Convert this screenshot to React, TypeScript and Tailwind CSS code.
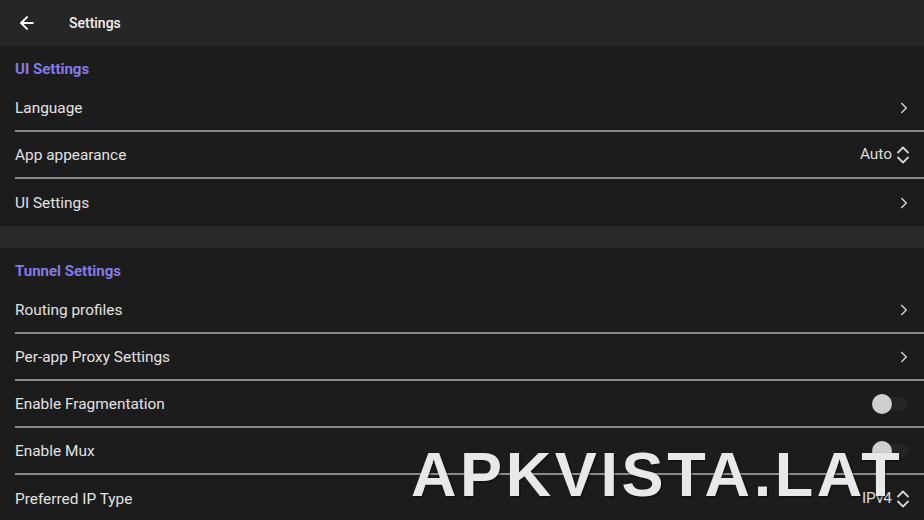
import { ArrowLeft, ChevronRight } from "lucide-react"

type Row =
  | { label: string; kind: "link" }
  | { label: string; kind: "select"; value: string }
  | { label: string; kind: "switch" }

const SECTIONS: { title: string; rows: Row[] }[] = [
  {
    title: "UI Settings",
    rows: [
      { label: "Language", kind: "link" },
      { label: "App appearance", kind: "select", value: "Auto" },
      { label: "UI Settings", kind: "link" },
    ],
  },
  {
    title: "Tunnel Settings",
    rows: [
      { label: "Routing profiles", kind: "link" },
      { label: "Per-app Proxy Settings", kind: "link" },
      { label: "Enable Fragmentation", kind: "switch" },
      { label: "Enable Mux", kind: "switch" },
      { label: "Preferred IP Type", kind: "select", value: "IPv4" },
    ],
  },
]

const UpDown = () => (
  <svg width="14" height="20" viewBox="0 0 14 20" fill="none" stroke="#d6d6d6" strokeWidth="1.8" strokeLinecap="round" strokeLinejoin="round">
    <path d="M2 7.5 L7 2.5 L12 7.5" />
    <path d="M2 12.5 L7 17.5 L12 12.5" />
  </svg>
)

const Trailing = ({ row }: { row: Row }) => {
  if (row.kind === "link") {
    return <ChevronRight className="w-[18px] h-[18px] -mr-[3px] text-[#d0d0d0]" strokeWidth={2} />
  }
  if (row.kind === "select") {
    return (
      <div className="flex items-center gap-[4px]">
        <span className="text-[15.4px] text-[#dcdcdc]">{row.value}</span>
        <UpDown />
      </div>
    )
  }
  return (
    <div className="relative w-[36px] h-[20px] mr-[2px] flex items-center">
      <div className="absolute left-[6px] right-0 h-[14px] rounded-full bg-[#252525]" />
      <div className="absolute left-0 w-[20px] h-[20px] rounded-full bg-[#cfcfcf]" />
    </div>
  )
}

export default function App() {
  return (
    <div className="relative w-[924px] h-[520px] overflow-hidden bg-[#1c1c1c] font-['Roboto',sans-serif] text-[#e2e2e2]">
      <div className="h-[46px] bg-[#262626] flex items-center">
        <ArrowLeft className="ml-[17px] w-[20px] h-[20px] text-white" strokeWidth={2.4} />
        <span className="ml-[32px] text-[14px] font-medium text-[#f0f0f0]">Settings</span>
      </div>

      {SECTIONS.map((section, si) => (
        <div key={section.title}>
          {si > 0 && <div className="h-[22px] bg-[#292929]" />}
          <div className="h-[39px] pt-[14px] pl-[15px] leading-[18px] text-[15px] font-bold text-[#8679ec]">
            {section.title}
          </div>
          {section.rows.map((row, ri) => (
            <div
              key={row.label}
              className={`ml-[15px] h-[47px] pt-[1px] flex items-center justify-between pr-[14px] ${
                ri < section.rows.length - 1 ? "border-b-2 border-[#8a8a8a]" : ""
              }`}
            >
              <span className="text-[15.4px] leading-[20px]">{row.label}</span>
              <Trailing row={row} />
            </div>
          ))}
        </div>
      ))}

      <div className="absolute left-[411px] top-[439px] text-[63px] leading-[70px] font-bold font-['Liberation_Sans',sans-serif] tracking-[3.6px] text-[#e8e8e8] [text-shadow:1px_1px_2px_rgba(0,0,0,0.6)]">
        APKVISTA.LAT
      </div>
    </div>
  )
}
